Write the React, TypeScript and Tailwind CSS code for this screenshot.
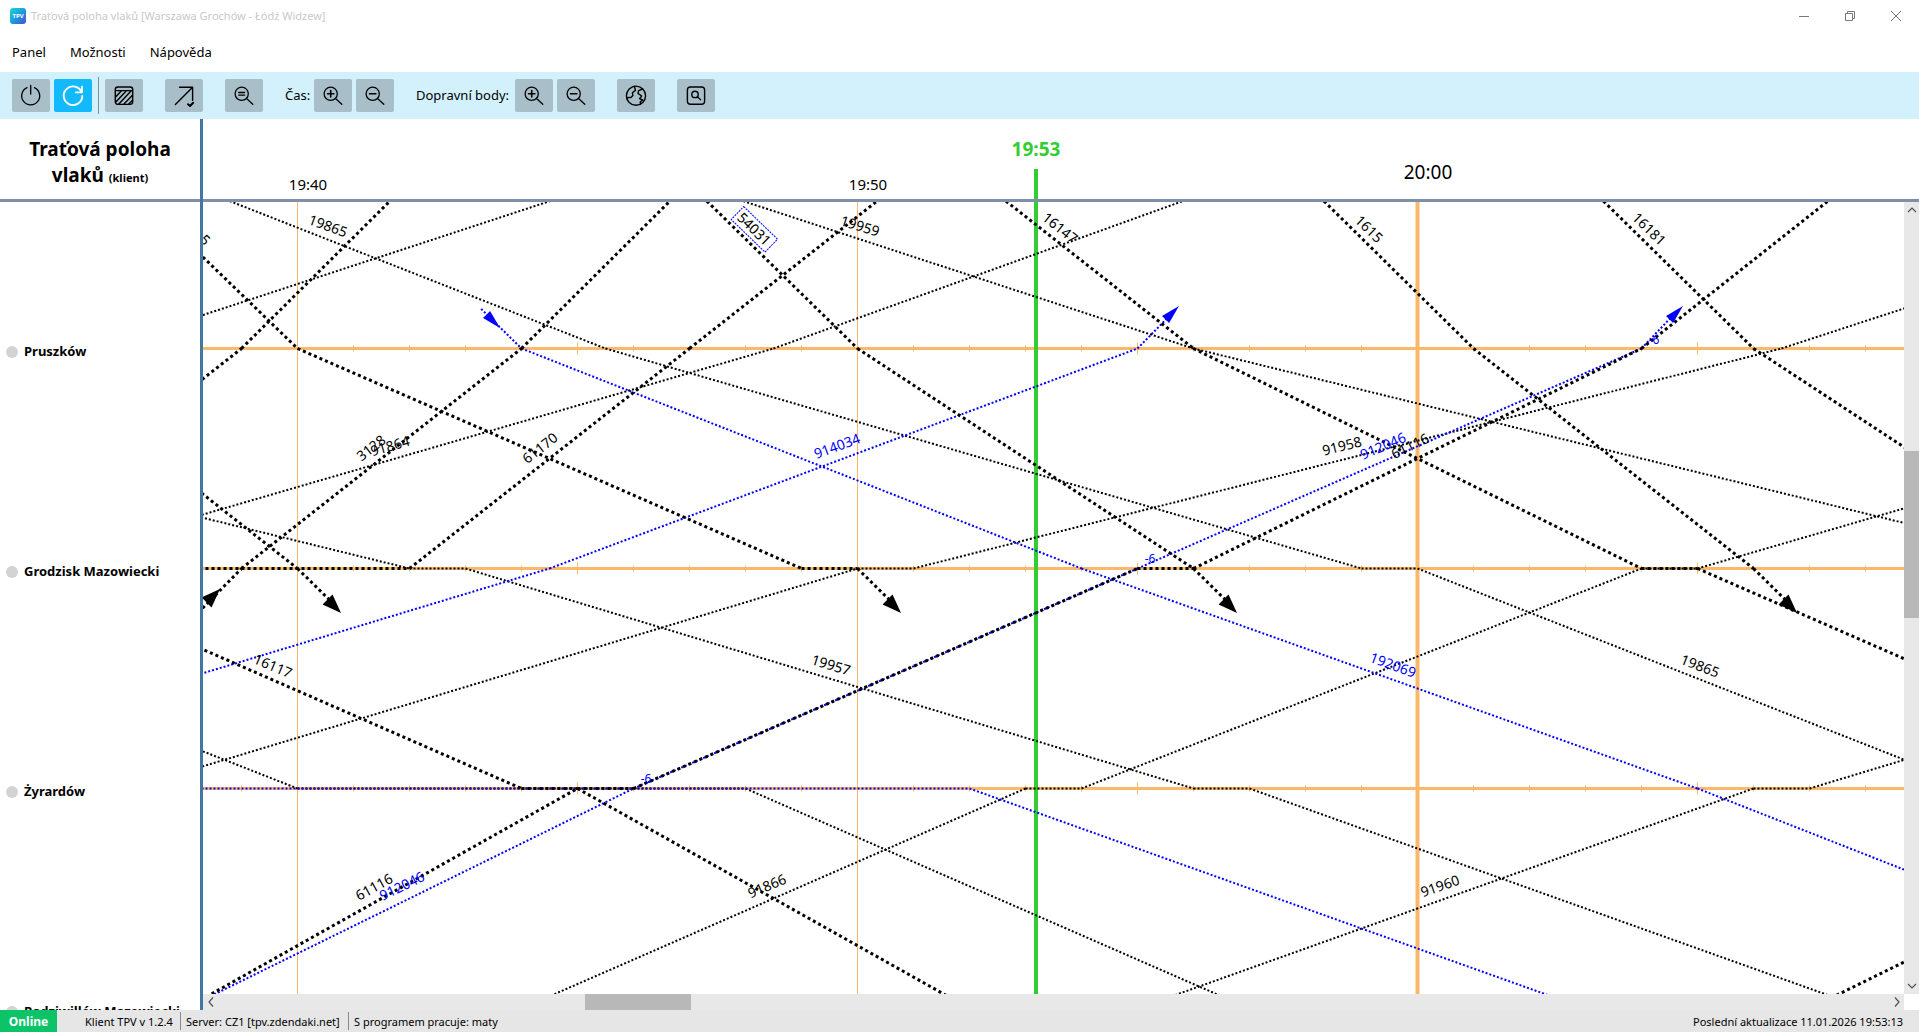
import type { ReactNode } from 'react';

/* Chart scale: one minute is 56 px, one station interval is 220 px. */
const toX = (minute: number) => 94.5 + 56 * minute;
const toY = (station: number) => 146.5 + 220 * station;

type Point = [minute: number, station: number];

const TOP = -0.67;
const BOTTOM = 3;

const thinTrains: Point[][] = [
  [[-1.21, TOP], [5.5, 0], [19, 1], [20, 1], [30, 2]],
  [[7.96, TOP], [16, 0], [32, 1]],
  [[-3, 2], [10, 1], [11, 1], [26.5, 0], [28.7, -0.183]],
  [[-5, 1], [8.5, 0], [15.81, TOP]],
  [[-1.69, -0.152], [4.51, TOP]],
  [[-14, 0], [2, 1], [3, 1], [16, 2], [17, 2], [28, BOTTOM]],
  [[-10, 1], [0, 2], [8, 2], [17, BOTTOM]],
  [[4, BOTTOM], [13, 2], [14, 2], [24, 1], [25, 1], [38.5, 0]],
  [[15, BOTTOM], [26, 2], [27, 2], [40, 1]],
];

const blueTrains: Point[][] = [
  [[-2, BOTTOM], [6, 2], [15, 1], [24, 0], [24.56, -0.15]],
  [[3.28, -0.18], [4, 0], [14, 1], [25, 2], [35, BOTTOM]],
  [[-8.5, 2], [4.5, 1], [15, 0], [15.54, -0.14]],
  [[-4, 2], [12, 2], [23, BOTTOM]],
];

const thickTrains: Point[][] = [
  [[12.65, TOP], [16, 0], [24, 1], [25, 1], [34, 2]],
  [[18.33, TOP], [21, 0], [26, 1], [26.56, 1.14]],
  [[23.32, TOP], [26, 0], [32, 1]],
  [[-2, BOTTOM], [5, 2], [6, 2], [15, 1], [16, 1], [24, 0], [27.33, TOP]],
  [[-5, 1], [4, 2], [5, 2], [12, BOTTOM]],
  [[-4, 1], [2, 1], [7, 0], [10.35, TOP]],
  [[-1.77, 1.2], [-1, 1], [4, 0], [6.65, TOP]],
  [[-1.69, -0.416], [0, 0], [9, 1], [10, 1], [10.56, 1.14]],
  [[-6, 1], [-1, 0], [1.65, TOP]],
  [[-5, 0], [0, 1], [0.56, 1.14]],
  [[7.31, TOP], [10, 0], [16, 1], [16.56, 1.14]],
  [[27, BOTTOM], [35, 2]],
];

const BLACK = '#000000';
const BLUE = '#0000ff';
const GRID = '#fbb86b';

const labels: { text: string; x: number; y: number; angle: number; color: string }[] = [
  { text: '19865', x: 125, y: 24, angle: 20, color: BLACK },
  { text: '19959', x: 657, y: 24, angle: 17, color: BLACK },
  { text: '54031', x: 551, y: 27, angle: 44, color: BLACK },
  { text: '16147', x: 857, y: 26, angle: 38, color: BLACK },
  { text: '1615', x: 1166, y: 27, angle: 44, color: BLACK },
  { text: '16181', x: 1446, y: 27, angle: 44, color: BLACK },
  { text: '5', x: 2, y: 38, angle: 44, color: BLACK },
  { text: '3128', x: 168, y: 246, angle: -38, color: BLACK },
  { text: '91864', x: 187, y: 244, angle: -16, color: BLACK },
  { text: '61170', x: 337, y: 246, angle: -38, color: BLACK },
  { text: '914034', x: 634, y: 244, angle: -20, color: BLUE },
  { text: '91958', x: 1139, y: 244, angle: -14, color: BLACK },
  { text: '912046', x: 1180, y: 244, angle: -23, color: BLUE },
  { text: '61116', x: 1207, y: 244, angle: -26, color: BLACK },
  { text: '16117', x: 70, y: 464, angle: 23, color: BLACK },
  { text: '19957', x: 628, y: 463, angle: 17, color: BLACK },
  { text: '192069', x: 1190, y: 463, angle: 20, color: BLUE },
  { text: '19865', x: 1497, y: 464, angle: 21, color: BLACK },
  { text: '61116', x: 171, y: 685, angle: -29, color: BLACK },
  { text: '912046', x: 199, y: 684, angle: -26, color: BLUE },
  { text: '91866', x: 564, y: 684, angle: -23, color: BLACK },
  { text: '91960', x: 1237, y: 684, angle: -19, color: BLACK },
];

const delays = [
  { x: 443, y: 577 },
  { x: 947, y: 357 },
  { x: 1451, y: 138 },
];

const arrows = [
  { x: 138, y: 411, angle: 45, color: BLACK, half: 7 },
  { x: 698, y: 411, angle: 45, color: BLACK, half: 7 },
  { x: 1034, y: 411, angle: 45, color: BLACK, half: 7 },
  { x: 1594, y: 411, angle: 45, color: BLACK, half: 7 },
  { x: 17, y: 387, angle: -45, color: BLACK, half: 7 },
  { x: 976, y: 104, angle: -45, color: BLUE, half: 5 },
  { x: 1480, y: 104, angle: -45, color: BLUE, half: 5 },
  { x: 297, y: 126, angle: 45, color: BLUE, half: 5 },
];

const stations = ['Pruszków', 'Grodzisk Mazowiecki', 'Żyrardów', 'Radziwiłłów Mazowiecki'];

const minutes = Array.from({ length: 36 }, (_, i) => i - 2);

/* Every section is its own subpath, so the dots start afresh at each station. */
function trainPath(train: Point[]) {
  return train
    .slice(1)
    .map(([m, s], i) => `M${toX(train[i][0])} ${toY(train[i][1])}L${toX(m)} ${toY(s)}`)
    .join('');
}

function Trains({ trains, color, width }: { trains: Point[][]; color: string; width: number }) {
  return (
    <g fill="none" stroke={color} strokeWidth={width} strokeDasharray={`${width} ${width}`}>
      {trains.map((train, i) => (
        <path key={i} d={trainPath(train)} />
      ))}
    </g>
  );
}

function Chart() {
  return (
    <svg className="block h-full w-full" role="img" aria-label="Grafikon vlaků">
      <g stroke={GRID}>
        <line x1={toX(0)} x2={toX(0)} y1="0" y2="100%" strokeWidth="1" />
        <line x1={toX(10)} x2={toX(10)} y1="0" y2="100%" strokeWidth="1" />
        <line x1={toX(20)} x2={toX(20)} y1="0" y2="100%" strokeWidth="4" />
        {[0, 1, 2].map((s) => (
          <g key={s}>
            <line x1="0" x2="100%" y1={toY(s)} y2={toY(s)} strokeWidth="3" />
            {minutes.map((m) => {
              const half = m % 5 === 0 ? 6 : 3;
              return <line key={m} x1={toX(m)} x2={toX(m)} y1={toY(s) - half} y2={toY(s) + half} strokeWidth="1" />;
            })}
          </g>
        ))}
      </g>
      <rect x="831" y="0" width="4" height="100%" fill="#32cd32" />
      <Trains trains={thinTrains} color={BLACK} width={2} />
      <Trains trains={blueTrains} color={BLUE} width={2} />
      <Trains trains={thickTrains} color={BLACK} width={3} />
      {arrows.map((a, i) => (
        <polygon
          key={i}
          points={`0,0 -19,-${a.half} -19,${a.half}`}
          fill={a.color}
          transform={`translate(${a.x} ${a.y}) rotate(${a.angle})`}
        />
      ))}
      <rect
        x="-23"
        y="-9"
        width="47"
        height="18"
        fill="none"
        stroke={BLUE}
        strokeDasharray="2 1"
        transform="translate(551 27) rotate(44)"
      />
      <g fontSize="14" textAnchor="middle">
        {labels.map((l, i) => (
          <text key={i} y="5" fill={l.color} transform={`translate(${l.x} ${l.y}) rotate(${l.angle})`}>
            {l.text}
          </text>
        ))}
      </g>
      <g fontSize="12" textAnchor="middle" fill={BLUE}>
        {delays.map((d) => (
          <text key={d.x} x={d.x} y={d.y + 4}>
            -6
          </text>
        ))}
      </g>
    </svg>
  );
}

function Icon({ children, width = 1.3 }: { children: ReactNode; width?: number }) {
  return (
    <svg
      className="h-6 w-6"
      viewBox="0 0 24 24"
      fill="none"
      stroke="currentColor"
      strokeWidth={width}
      strokeLinecap="round"
      strokeLinejoin="round"
      aria-hidden="true"
    >
      {children}
    </svg>
  );
}

function Magnifier({ children }: { children: ReactNode }) {
  return (
    <Icon>
      <circle cx="9.7" cy="9.8" r="6.6" />
      <path d="M14.5 14.6 20.8 20.2" />
      {children}
    </Icon>
  );
}

function ToolButton({ label, active = false, children }: { label: string; active?: boolean; children: ReactNode }) {
  return (
    <button
      type="button"
      aria-label={label}
      title={label}
      className={
        active
          ? 'flex h-[33px] w-[38px] items-center justify-center rounded-xs bg-[#12bafc] text-white'
          : 'flex h-[33px] w-[38px] items-center justify-center rounded-xs bg-[#a8bfc9] text-black'
      }
    >
      {children}
    </button>
  );
}

function TitleBar() {
  return (
    <header className="flex h-8 items-center bg-white pl-2.5">
      <svg className="h-4 w-4" viewBox="0 0 16 16" aria-hidden="true">
        <defs>
          <linearGradient id="logo" x1="0" y1="0" x2="1" y2="1">
            <stop offset="0" stopColor="#1fd6d0" />
            <stop offset="0.5" stopColor="#1d9be0" />
            <stop offset="1" stopColor="#4a4fd0" />
          </linearGradient>
        </defs>
        <rect width="16" height="16" rx="3" fill="url(#logo)" />
        <text x="8" y="10" fontSize="6" fontWeight="700" fill="#ffffff" textAnchor="middle">
          TPV
        </text>
      </svg>
      <h1 className="ml-[5px] flex-1 text-[11px] whitespace-nowrap text-[#c9c9c9]">
        Traťová poloha vlaků [Warszawa Grochów - Łódź Widzew]
      </h1>
      <div className="flex h-full text-[#777777]">
        <button type="button" aria-label="Minimalizovat" className="flex w-[46px] items-center justify-center">
          <svg className="h-2.5 w-2.5" viewBox="0 0 10 10" stroke="currentColor" fill="none">
            <path d="M0 5.5H10" />
          </svg>
        </button>
        <button type="button" aria-label="Obnovit" className="flex w-[46px] items-center justify-center">
          <svg className="h-2.5 w-2.5" viewBox="0 0 10 10" stroke="currentColor" fill="none">
            <path d="M0.5 2.5H7.5V9.5H0.5ZM2.5 2.5V0.5H9.5V7.5H7.5" />
          </svg>
        </button>
        <button type="button" aria-label="Zavřít" className="flex w-[46px] items-center justify-center">
          <svg className="h-2.5 w-2.5" viewBox="0 0 10 10" stroke="currentColor" fill="none">
            <path d="M0 0 10 10M10 0 0 10" />
          </svg>
        </button>
      </div>
    </header>
  );
}

function MenuBar() {
  return (
    <nav className="flex h-10 items-center gap-6 bg-white pt-0.5 pl-3 text-[13px]">
      <button type="button">Panel</button>
      <button type="button">Možnosti</button>
      <button type="button">Nápověda</button>
    </nav>
  );
}

function Toolbar() {
  return (
    <div className="flex h-[47px] items-center bg-[#d2f1fd] pl-3 text-[13px]">
      <div className="flex items-center gap-1">
        <ToolButton label="Odpojit">
          <Icon>
            <path d="M8 3.7A9 9 0 1 0 15.4 3.7M11.7 1.5V10" />
          </Icon>
        </ToolButton>
        <ToolButton label="Obnovit" active>
          <Icon width={1.9}>
            <path d="M20.6 8.2A9.3 9.3 0 1 0 21.3 12M21 2.6V8.4H15" />
          </Icon>
        </ToolButton>
      </div>
      <div className="mx-1.5 h-[37px] w-px bg-[#8b8b8b]" />
      <ToolButton label="Šrafování">
        <Icon width={1.4}>
          <rect x="3.3" y="3" width="17.4" height="17.4" rx="2.6" />
          <path d="M3.5 6.6H20.5M3.6 13 9.4 6.8M3.6 18.2 14.4 6.8M6.6 20.2 19 6.9M11.8 20.2 20.4 11.2M16.6 20.2 20.4 16.2" />
        </Icon>
      </ToolButton>
      <div className="ml-[22px]">
        <ToolButton label="Směr jízdy">
          <Icon width={1.4}>
            <path d="M3.4 20.6 20.6 3.2M7.6 3.2H20.6V16.4" />
            <path d="M16 20.2 18 22 21.2 18.8" strokeWidth="2" />
          </Icon>
        </ToolButton>
      </div>
      <div className="ml-[22px]">
        <ToolButton label="Výchozí přiblížení">
          <Magnifier>
            <path d="M6.7 8.5H12.7M6.7 11.1H12.7" />
          </Magnifier>
        </ToolButton>
      </div>
      <div className="ml-[22px] flex items-center gap-1">
        <span className="w-[25px] whitespace-nowrap">Čas:</span>
        <ToolButton label="Přiblížit čas">
          <Magnifier>
            <path d="M6.5 9.8H12.9M9.7 6.6V13" strokeWidth="1.6" />
          </Magnifier>
        </ToolButton>
        <ToolButton label="Oddálit čas">
          <Magnifier>
            <path d="M6.5 9.8H12.9" strokeWidth="1.6" />
          </Magnifier>
        </ToolButton>
      </div>
      <div className="ml-[22px] flex items-center gap-1">
        <span className="w-[95px] whitespace-nowrap">Dopravní body:</span>
        <ToolButton label="Přiblížit dopravní body">
          <Magnifier>
            <path d="M6.5 9.8H12.9M9.7 6.6V13" strokeWidth="1.6" />
          </Magnifier>
        </ToolButton>
        <ToolButton label="Oddálit dopravní body">
          <Magnifier>
            <path d="M6.5 9.8H12.9" strokeWidth="1.6" />
          </Magnifier>
        </ToolButton>
      </div>
      <div className="ml-[22px]">
        <ToolButton label="Mapa">
          <Icon width={1.4}>
            <circle cx="12" cy="11.7" r="9.6" />
            <path d="M10.4 2.3 11.4 6.4 8.4 8.8 8.9 11.4 6.8 13.6 4 13.4 2.9 14.4" />
            <path d="M18.6 5 14.6 6.6 14 9.4 17.6 12 15.6 14.6 18.6 16 16.2 18 16.6 20" />
          </Icon>
        </ToolButton>
      </div>
      <div className="ml-[22px]">
        <ToolButton label="Hledat">
          <Icon width={1.4}>
            <rect x="3.4" y="3" width="17.2" height="17.2" rx="3" />
            <circle cx="11" cy="10.4" r="3.2" />
            <path d="M13.4 12.8 16.6 15.8" />
          </Icon>
        </ToolButton>
      </div>
    </div>
  );
}

function StationPanel() {
  return (
    <aside className="flex w-[203px] shrink-0 flex-col border-r-[3px] border-[#4177a1]">
      <div className="flex h-[83px] shrink-0 flex-col items-center justify-center border-b-[3px] border-[#7f8fa9]">
        <h2 className="px-4 pt-2 text-center text-[19px] leading-[26px] font-bold">
          Traťová poloha vlaků <small className="text-[11px]">(klient)</small>
        </h2>
      </div>
      <div className="min-h-0 flex-1 overflow-hidden">
        <ul className="pt-10">
          {stations.map((name) => (
            <li key={name} className="flex h-[220px] items-center gap-1.5 pl-1.5 text-[13px] font-bold whitespace-nowrap">
              <span className="h-3 w-3 rounded-full bg-[#d3d3d3]" />
              {name}
            </li>
          ))}
        </ul>
      </div>
    </aside>
  );
}

function TimeAxis() {
  return (
    <div className="relative h-[83px] shrink-0 border-b-[3px] border-[#7f8fa9]">
      <span className="absolute bottom-[3px] left-[105px] -translate-x-1/2 text-[15px] leading-6">19:40</span>
      <span className="absolute bottom-[3px] left-[665px] -translate-x-1/2 text-[15px] leading-6">19:50</span>
      <span className="absolute bottom-[15px] left-[1225px] -translate-x-1/2 text-[19px] leading-6">20:00</span>
      <span className="absolute top-[18px] left-[833px] -translate-x-1/2 text-[19px] leading-6 font-bold text-[#32cd32]">
        19:53
      </span>
      <span className="absolute top-[50px] bottom-0 left-[831px] w-1 bg-[#32cd32]" />
    </div>
  );
}

function ScrollArrow({ label, d }: { label: string; d: string }) {
  return (
    <button type="button" aria-label={label} className="flex h-4 w-[15px] shrink-0 items-center justify-center">
      <svg className="h-2.5 w-2.5" viewBox="0 0 10 10" fill="none" stroke="#505050" strokeWidth="1.2">
        <path d={d} />
      </svg>
    </button>
  );
}

function StatusBar() {
  return (
    <footer className="flex h-[22px] shrink-0 items-center bg-[#e6e6e6] text-[11px] whitespace-nowrap">
      <strong className="flex h-full w-[57px] items-center justify-center bg-[#0cc368] pt-0.5 text-xs text-white">
        Online
      </strong>
      <span className="ml-7 w-[90px] pt-0.5">Klient TPV v 1.2.4</span>
      <span className="mx-[5px] h-[18px] w-px bg-[#8a8a8a]" />
      <span className="w-[157px] pt-0.5">Server: CZ1 [tpv.zdendaki.net]</span>
      <span className="mx-[5px] h-[18px] w-px bg-[#8a8a8a]" />
      <span className="pt-0.5">S programem pracuje: maty</span>
      <span className="ml-auto pt-0.5 pr-4">Poslední aktualizace 11.01.2026 19:53:13</span>
    </footer>
  );
}

export default function App() {
  return (
    <div className="flex h-screen flex-col overflow-hidden bg-white font-['Noto_Sans','Open_Sans',sans-serif] text-black">
      <TitleBar />
      <MenuBar />
      <Toolbar />
      <main className="flex min-h-0 flex-1">
        <StationPanel />
        <section className="flex min-w-0 flex-1 flex-col">
          <TimeAxis />
          <div className="flex min-h-0 flex-1">
            <div className="min-w-0 flex-1 overflow-hidden">
              <Chart />
            </div>
            <div className="flex w-[15px] shrink-0 flex-col bg-[#e8e8e8]">
              <ScrollArrow label="Nahoru" d="M1 7 5 3 9 7" />
              <div className="flex flex-1 flex-col">
                <div className="flex-[233]" />
                <div className="flex-[167] bg-[#b8b8b8]" />
                <div className="flex-[360]" />
              </div>
              <ScrollArrow label="Dolů" d="M1 3 5 7 9 3" />
            </div>
          </div>
          <div className="flex h-4 shrink-0 pr-[15px]">
            <div className="flex flex-1 bg-[#e8e8e8]">
              <ScrollArrow label="Vlevo" d="M7 0.5 3 5 7 9.5" />
              <div className="flex flex-1">
                <div className="flex-[367]" />
                <div className="flex-[106] bg-[#b8b8b8]" />
                <div className="flex-[1198]" />
              </div>
              <ScrollArrow label="Vpravo" d="M3 0.5 7 5 3 9.5" />
            </div>
          </div>
        </section>
      </main>
      <StatusBar />
    </div>
  );
}
